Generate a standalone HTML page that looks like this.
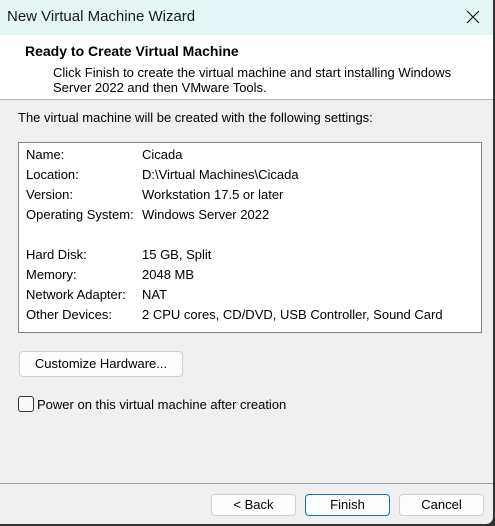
<!DOCTYPE html>
<html><head><style>
*{margin:0;padding:0;box-sizing:border-box}
body{width:495px;height:526px;overflow:hidden;background:#333;font-family:"Liberation Sans",sans-serif;font-size:13px;color:#000;position:relative}
.win{position:absolute;left:0;top:0;width:493px;height:524px;background:#f0f0f0;border-bottom-right-radius:7px;overflow:hidden}
.title{position:absolute;left:0;top:0;width:493px;height:35px;background:#e6f6f6}
.title span{position:absolute;left:7px;top:8px;font-size:15px;color:#1a1a1a}
.x{position:absolute;left:466px;top:10px}
.hdr{position:absolute;left:0;top:35px;width:493px;height:65px;background:#fff;border-bottom:1px solid #b4b4b4}
.t{position:absolute;white-space:nowrap}
.box{position:absolute;left:18px;top:142px;width:464px;height:191px;background:#fff;border:1px solid #828282}
.btn{position:absolute;background:#fdfdfd;border:1px solid #d0d0d0;border-radius:4px;text-align:center;font-size:13px}
</style></head><body>
<div class="win">
<div class="title"><span>New Virtual Machine Wizard</span>
<svg class="x" width="14" height="14" viewBox="0 0 14 14"><path d="M1 1L13 13M13 1L1 13" stroke="#111" stroke-width="1.2"/></svg></div>
<div class="hdr">
<div class="t" style="left:25px;top:8px;font-weight:bold;font-size:14px">Ready to Create Virtual Machine</div>
<div class="t" style="left:53px;top:30px">Click Finish to create the virtual machine and start installing Windows</div>
<div class="t" style="left:53px;top:45px">Server 2022 and then VMware Tools.</div>
</div>
<div class="t" style="left:18px;top:110px">The virtual machine will be created with the following settings:</div>
<div class="box">
<div class="t" style="left:7px;top:2px;line-height:20px">Name:<br>Location:<br>Version:<br>Operating System:<br><br>Hard Disk:<br>Memory:<br>Network Adapter:<br>Other Devices:</div>
<div class="t" style="left:123px;top:2px;line-height:20px">Cicada<br>D:\Virtual Machines\Cicada<br>Workstation 17.5 or later<br>Windows Server 2022<br><br>15 GB, Split<br>2048 MB<br>NAT<br>2 CPU cores, CD/DVD, USB Controller, Sound Card</div>
</div>
<div class="btn" style="left:19px;top:351px;width:164px;height:26px;line-height:24px">Customize Hardware...</div>
<div style="position:absolute;left:18px;top:396px;width:16px;height:16px;border:1px solid #333;border-radius:3px;background:#fafafa"></div>
<div class="t" style="left:37px;top:397px">Power on this virtual machine after creation</div>
<div style="position:absolute;left:0;top:483px;width:493px;height:1px;background:#a0a0a0"></div>
<div class="btn" style="left:211px;top:494px;width:85px;height:22px;line-height:20px">&lt; Back</div>
<div class="btn" style="left:305px;top:494px;width:85px;height:22px;line-height:20px;border-color:#1a6fb4">Finish</div>
<div class="btn" style="left:399px;top:494px;width:85px;height:22px;line-height:20px">Cancel</div>
</div>
</body></html>
